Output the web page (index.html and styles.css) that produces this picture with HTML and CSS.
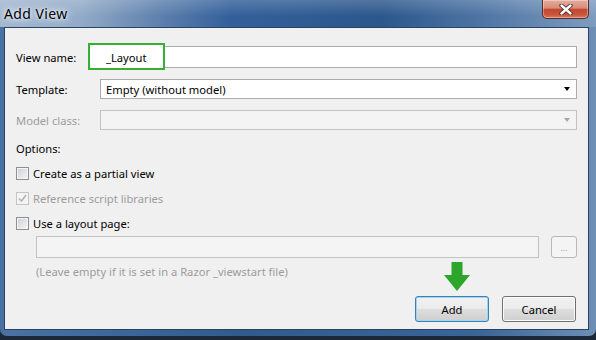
FILE: index.html
```html
<!DOCTYPE html>
<html>
<head>
<meta charset="utf-8">
<link rel="stylesheet" href="styles.css">
</head>
<body>
<div class="window">
  <div class="titlebar">
    <span class="title">Add View</span>
    <div class="close">
      <svg width="14" height="11" viewBox="0 0 14 11">
        <path d="M2.5 1.5 L11.5 9.5 M11.5 1.5 L2.5 9.5" stroke="#4a2a26" stroke-width="4.2" stroke-linecap="round"/>
        <path d="M2.5 1.5 L11.5 9.5 M11.5 1.5 L2.5 9.5" stroke="#ffffff" stroke-width="2.4" stroke-linecap="round"/>
      </svg>
    </div>
  </div>
  <div class="client">
    <div class="row row-name">
      <span class="label">View name:</span>
      <div class="field textbox">
        <div class="highlight"></div>
        <span class="value">_Layout</span>
      </div>
    </div>
    <div class="row row-sel">
      <span class="label">Template:</span>
      <div class="field combo">
        <span class="value">Empty (without model)</span>
        <span class="arrow"></span>
      </div>
    </div>
    <div class="row row-sel">
      <span class="label disabled">Model class:</span>
      <div class="field combo is-disabled">
        <span class="value"></span>
        <span class="arrow"></span>
      </div>
    </div>
    <div class="options">Options:</div>
    <div class="check">
      <span class="box"></span>
      <span>Create as a partial view</span>
    </div>
    <div class="check disabled">
      <span class="box checked">
        <svg width="9" height="9" viewBox="0 0 9 9"><path d="M1 4.5 L3.5 7 L8 1" fill="none" stroke="#b4b4b4" stroke-width="1.6"/></svg>
      </span>
      <span>Reference script libraries</span>
    </div>
    <div class="check">
      <span class="box"></span>
      <span>Use a layout page:</span>
    </div>
    <div class="layout-row">
      <div class="field layout-input is-disabled"></div>
      <div class="browse">...</div>
    </div>
    <div class="hint">(Leave empty if it is set in a Razor _viewstart file)</div>
    <div class="buttons">
      <div class="btn btn-default">
        <svg class="pointer" width="26" height="29" viewBox="0 0 26 29">
          <rect x="7.5" y="0" width="11" height="14" fill="#2ca62a"/>
          <polygon points="0,13 26,13 13,29" fill="#2ca62a"/>
        </svg>
        Add
      </div>
      <div class="btn">Cancel</div>
    </div>
  </div>
</div>
</body>
</html>
```
FILE: styles.css
```css
html, body {
  margin: 0;
  padding: 0;
}
body {
  width: 596px;
  height: 340px;
  background: #1c2838;
  font-family: "Noto Sans", "Open Sans", sans-serif;
  font-size: 11.2px;
  color: #000;
  overflow: hidden;
}
.window {
  width: 596px;
  height: 336px;
  background: linear-gradient(90deg, #4a73a3 0%, #2f5b8f 40%, #3a6597 80%, #6d8fb6 100%);
  border-radius: 0 0 7px 7px;
  display: flex;
  flex-direction: column;
  box-sizing: border-box;
  padding-bottom: 6px;
}
.titlebar {
  height: 27px;
  flex: none;
  display: flex;
  justify-content: space-between;
  align-items: flex-start;
  background:
    linear-gradient(180deg, rgba(255,255,255,0.18) 0%, rgba(255,255,255,0) 60%),
    linear-gradient(90deg, #a3b7cf 0px, #93abc8 80px, #5d80ad 160px, #33609a 230px, #2b578c 380px, #4d74a3 480px, #7e9cc0 596px);
}
.title {
  padding: 4px 0 0 4px;
  font-family: "Noto Sans", sans-serif;
  font-size: 14px;
  letter-spacing: 0.4px;
  color: #000;
  text-shadow: 0 0 6px #dfe8f2, 0 0 10px #dfe8f2, 0 0 3px #ffffff;
}
.close {
  width: 47px;
  height: 19px;
  margin-right: 7px;
  box-sizing: border-box;
  border: 1px solid #5b2a22;
  border-top: none;
  border-radius: 0 0 5px 5px;
  background: linear-gradient(180deg, #e6ad9f 0%, #d88b78 45%, #c6472f 52%, #c9533c 80%, #d97a5e 100%);
  box-shadow: inset 0 0 0 1px rgba(255,255,255,0.35);
  display: flex;
  align-items: center;
  justify-content: center;
}
.client {
  flex: 1;
  margin: 0 7px 0 4px;
  background: #f0f0f0;
  border: 1px solid #2a4363;
  padding: 18px 11px 0 11px;
  display: flex;
  flex-direction: column;
  position: relative;
}
.row {
  display: grid;
  grid-template-columns: 84px 1fr;
  align-items: center;
  margin-bottom: 11px;
}
.row-name { height: 22px; }
.row-sel { height: 20px; }
.label { white-space: nowrap; }
.disabled { color: #9c9c9c; }
.field {
  box-sizing: border-box;
  height: 100%;
  background: #fff;
  border: 1px solid #acacac;
  display: flex;
  align-items: center;
  padding-left: 5px;
  position: relative;
}
.field.is-disabled {
  background: #f4f4f4;
  border-color: #c2c2c2;
}
.textbox .value { position: relative; z-index: 2; }
.highlight {
  position: absolute;
  left: -13px;
  top: -4px;
  width: 77px;
  height: 27px;
  box-sizing: border-box;
  border: 2px solid #35b132;
  background: #fff;
  z-index: 1;
}
.combo { justify-content: space-between; padding-right: 6px; }
.arrow {
  width: 0;
  height: 0;
  border-left: 3.5px solid transparent;
  border-right: 3.5px solid transparent;
  border-top: 4px solid #000;
}
.is-disabled .arrow { border-top-color: #a8a8a8; }
.options {
  height: 16px;
  line-height: 16px;
}
.check {
  height: 25px;
  display: flex;
  align-items: center;
  gap: 4px;
}
.options + .check { margin-top: 4px; }
.box {
  width: 13px;
  height: 13px;
  box-sizing: border-box;
  border: 1px solid #8e8f8f;
  background: linear-gradient(135deg, #cbcfd5 0%, #f6f6f6 100%);
  box-shadow: inset 0 0 0 1px #f4f4f4;
  display: flex;
  align-items: center;
  justify-content: center;
}
.box.checked {
  border-color: #c4c4c4;
  background: #f4f4f4;
  box-shadow: none;
}
.layout-row {
  display: flex;
  gap: 12px;
  height: 22px;
  padding-left: 20px;
}
.layout-input { flex: 1; }
.browse {
  width: 26px;
  box-sizing: border-box;
  border: 1px solid #b8b8b8;
  border-radius: 3px;
  background: #f4f4f4;
  color: #a6a6a6;
  font-size: 9px;
  display: flex;
  justify-content: center;
  align-items: center;
}
.hint {
  padding-left: 20px;
  margin-top: 6px;
  height: 16px;
  line-height: 16px;
  color: #9c9c9c;
}
.buttons {
  margin-top: 16px;
  display: flex;
  justify-content: flex-end;
  gap: 13px;
  padding-right: 1px;
}
.btn {
  width: 74px;
  height: 26px;
  box-sizing: border-box;
  border: 1px solid #707070;
  border-radius: 3px;
  background: linear-gradient(180deg, #f2f2f2 0%, #ebebeb 48%, #dddddd 52%, #cfcfcf 100%);
  box-shadow: inset 0 0 0 1px #fbfbfb;
  display: flex;
  align-items: center;
  justify-content: center;
  position: relative;
}
.btn-default {
  border-color: #3c7fb1;
  box-shadow: inset 0 0 0 1px #9ad6f5;
}
.pointer {
  position: absolute;
  left: 28px;
  top: -35px;
}
```
